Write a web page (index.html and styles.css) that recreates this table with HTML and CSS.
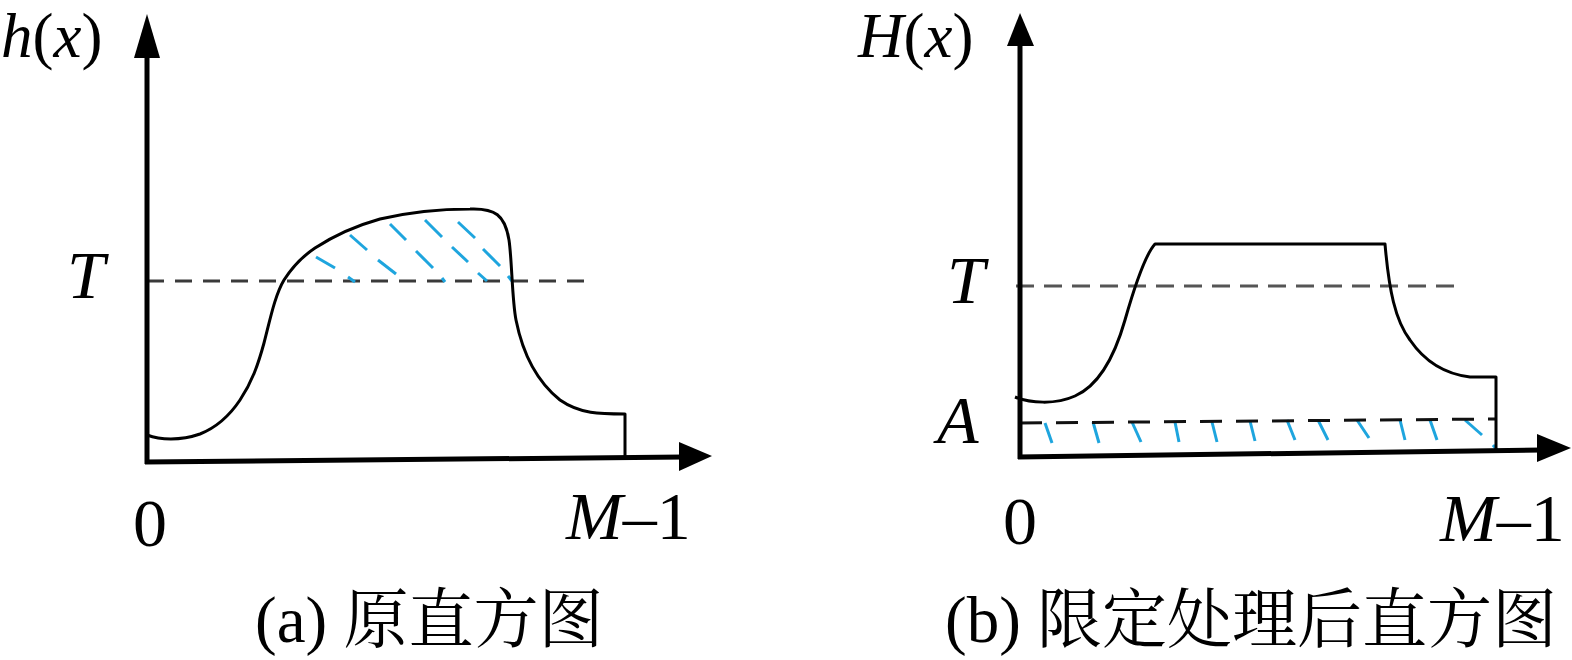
FILE: index.html
```html
<!DOCTYPE html>
<html lang="zh-CN">
<head>
<meta charset="utf-8">
<title>直方图限定处理</title>
<link rel="stylesheet" href="styles.css">
</head>
<body>
<div class="figure">
  <div class="panel panel-a">
    <svg class="plot" width="786" height="585" viewBox="0 0 786 585" xmlns="http://www.w3.org/2000/svg">
      <text class="axis-title" x="1" y="57"><tspan class="it">h</tspan>(<tspan class="it">x</tspan>)</text>
      <text class="tick it" x="67" y="298">T</text>
      <text class="tick" x="133" y="546">0</text>
      <text class="tick" x="566" y="539"><tspan class="it">M</tspan>–1</text>

      <line class="dash-t" x1="147" y1="281" x2="585" y2="281"/>

      <g class="hatch">
        <line x1="390" y1="224" x2="406" y2="240"/>
        <line x1="425" y1="220" x2="442" y2="237"/>
        <line x1="458" y1="222" x2="475" y2="238"/>
        <line x1="350" y1="235" x2="367" y2="250"/>
        <line x1="452" y1="247" x2="468" y2="262"/>
        <line x1="483" y1="249" x2="500" y2="266"/>
        <line x1="316" y1="257" x2="335" y2="268"/>
        <line x1="378" y1="260" x2="396" y2="274"/>
        <line x1="416" y1="251" x2="433" y2="268"/>
        <line x1="348" y1="277" x2="355" y2="282"/>
        <line x1="442" y1="278" x2="445" y2="282"/>
        <line x1="478" y1="273" x2="487" y2="281"/>
        <line x1="508" y1="276" x2="512" y2="281"/>
      </g>

      <path class="curve" d="M147,435 C160,440 180,441 200,434 C215,428 228,418 240,400 C252,382 258,365 264,343 C270,320 275,295 284,280 C293,266 303,256 315,248 C335,235 355,226 380,219 C410,212 440,209 470,209 C495,208 505,215 509,240 C512,260 512,300 516,320 C522,350 535,380 560,400 C580,414 600,414 625,414 L625,458"/>

      <line class="axis" x1="147" y1="464" x2="147" y2="50"/>
      <polygon class="arrow" points="147,14 134,58 160,58"/>
      <line class="axis" x1="145" y1="462" x2="684" y2="457"/>
      <polygon class="arrow" points="712,456 679,442 679,471"/>
    </svg>
    <div class="caption">(a) 原直方图</div>
  </div>

  <div class="panel panel-b">
    <svg class="plot" width="786" height="585" viewBox="786 0 786 585" xmlns="http://www.w3.org/2000/svg">
      <text class="axis-title" x="858" y="57"><tspan class="it">H</tspan>(<tspan class="it">x</tspan>)</text>
      <text class="tick it" x="947" y="303">T</text>
      <text class="tick it" x="937" y="443">A</text>
      <text class="tick" x="1003" y="544">0</text>
      <text class="tick" x="1440" y="541"><tspan class="it">M</tspan>–1</text>

      <line class="dash-t2" x1="1016" y1="286" x2="1458" y2="286"/>

      <g class="hatch">
        <line x1="1045" y1="423" x2="1052" y2="443"/>
        <line x1="1093" y1="422" x2="1099" y2="443"/>
        <line x1="1132" y1="422" x2="1141" y2="442"/>
        <line x1="1175" y1="422" x2="1179" y2="442"/>
        <line x1="1212" y1="422" x2="1217" y2="442"/>
        <line x1="1250" y1="421" x2="1255" y2="441"/>
        <line x1="1287" y1="420" x2="1295" y2="440"/>
        <line x1="1318" y1="420" x2="1328" y2="440"/>
        <line x1="1357" y1="420" x2="1369" y2="438"/>
        <line x1="1400" y1="420" x2="1405" y2="440"/>
        <line x1="1430" y1="420" x2="1437" y2="440"/>
        <line x1="1465" y1="420" x2="1482" y2="435"/>
        <line x1="1493" y1="445" x2="1497" y2="450"/>
      </g>

      <line class="dash-a" x1="1020" y1="423" x2="1496" y2="419"/>

      <path class="curve" d="M1015,397 C1030,403 1055,405 1075,396 C1100,385 1115,355 1125,320 C1135,285 1145,255 1155,244 L1385,244 C1389,290 1395,320 1410,340 C1425,362 1445,374 1470,377 L1496,377 L1496,451"/>

      <line class="axis" x1="1020" y1="459" x2="1020" y2="40"/>
      <polygon class="arrow" points="1020,13 1007,46 1034,46"/>
      <line class="axis" x1="1018" y1="457" x2="1542" y2="450"/>
      <polygon class="arrow" points="1571,448 1537,434 1537,462"/>
    </svg>
    <div class="caption">(b) 限定处理后直方图</div>
  </div>
</div>
</body>
</html>
```

FILE: styles.css
```css
html, body {
  margin: 0;
  padding: 0;
  background: #ffffff;
}

body {
  width: 1572px;
  height: 660px;
  overflow: hidden;
  font-family: "Liberation Serif", "Noto Serif CJK SC", "Noto Sans CJK SC", serif;
  color: #000000;
}

.figure {
  display: flex;
  flex-direction: row;
}

.panel {
  width: 786px;
  display: flex;
  flex-direction: column;
}

.plot {
  display: block;
}

.axis-title {
  font-family: "Liberation Serif", serif;
  font-size: 63px;
  fill: #000000;
}

.tick {
  font-family: "Liberation Serif", serif;
  font-size: 68px;
  fill: #000000;
}

.it {
  font-style: italic;
}

.axis {
  stroke: #000000;
  stroke-width: 5;
}

.arrow {
  fill: #000000;
}

.curve {
  fill: none;
  stroke: #000000;
  stroke-width: 3;
  stroke-linejoin: round;
}

.dash-t {
  stroke: #3a3a3a;
  stroke-width: 3;
  stroke-dasharray: 17 11;
}

.dash-t2 {
  stroke: #555555;
  stroke-width: 3;
  stroke-dasharray: 18 10;
}

.dash-a {
  stroke: #111111;
  stroke-width: 3;
  stroke-dasharray: 22 14;
}

.hatch line {
  stroke: #1ea5de;
  stroke-width: 3;
  stroke-linecap: butt;
}

.caption {
  font-size: 65px;
  line-height: 70px;
  white-space: nowrap;
}

.panel-a .caption {
  padding-left: 255px;
}

.panel-b .caption {
  padding-left: 159px;
}
```
